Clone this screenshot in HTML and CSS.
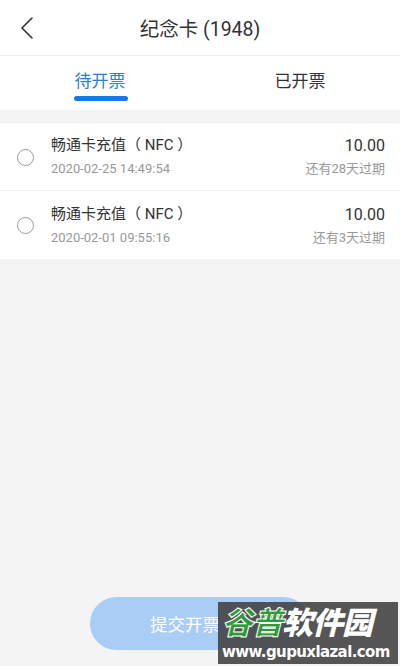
FILE: index.html
```html
<!DOCTYPE html>
<html lang="zh-CN">
  <head>
    <meta charset="UTF-8" />
    <meta name="viewport" content="width=device-width, initial-scale=1.0" />
    <title>纪念卡 (1948)</title>
    <link rel="stylesheet" href="styles.css">
  </head>
  <body>
    <div class="page">
      <div class="header">
        <button class="back" aria-label="返回">
          <svg width="14" height="24" viewBox="0 0 14 24">
            <path d="M12 2 L2 12 L12 22" fill="none" stroke="#333" stroke-width="1.6" stroke-linecap="round" stroke-linejoin="round" />
          </svg>
        </button>
        <div class="title">纪念卡 (1948)</div>
      </div>

      <div class="tabs">
        <div class="tab active">待开票</div>
        <div class="tab">已开票</div>
      </div>

      <div class="list">
        <div class="item">
          <span class="radio"></span>
          <div class="info">
            <div class="name">畅通卡充值（ NFC ）</div>
            <div class="date">2020-02-25 14:49:54</div>
          </div>
          <div class="side">
            <div class="amount">10.00</div>
            <div class="expire">还有28天过期</div>
          </div>
        </div>
        <div class="item">
          <span class="radio"></span>
          <div class="info">
            <div class="name">畅通卡充值（ NFC ）</div>
            <div class="date">2020-02-01 09:55:16</div>
          </div>
          <div class="side">
            <div class="amount">10.00</div>
            <div class="expire">还有3天过期</div>
          </div>
        </div>
      </div>

      <div class="footer">
        <button class="submit">提交开票</button>
      </div>

      <div class="watermark">
        <div class="wm-logo"><span class="wm-green">谷普</span><span class="wm-white">软件园</span></div>
        <div class="wm-url">www.gupuxlazal.com</div>
      </div>
    </div>
  </body>
</html>
```

FILE: styles.css
```css
* {
  margin: 0;
  padding: 0;
  box-sizing: border-box;
}

body {
  font-family: Roboto, "Noto Sans CJK SC", "Noto Sans", sans-serif;
  background-color: #f4f4f4;
  width: 400px;
  height: 666px;
  overflow: hidden;
}

.page {
  position: relative;
  height: 666px;
  display: flex;
  flex-direction: column;
}

.header {
  position: relative;
  height: 56px;
  background-color: #fff;
  border-bottom: 1px solid #ececec;
  display: flex;
  align-items: center;
  justify-content: center;
}

.back {
  position: absolute;
  left: 20px;
  top: 16px;
  border: none;
  background: none;
  display: flex;
}

.title {
  font-size: 19.5px;
  color: #333;
}

.tabs {
  height: 54px;
  background-color: #fff;
  display: flex;
}

.tab {
  flex: 1;
  display: flex;
  justify-content: center;
  padding-top: 11px;
  font-size: 17px;
  color: #333;
}

.tab.active {
  color: #2a7fd8;
  position: relative;
}

.tab.active::after {
  content: "";
  position: absolute;
  left: 74px;
  top: 40px;
  width: 54px;
  height: 5px;
  border-radius: 3px;
  background-color: #1a78e8;
}

.list {
  margin-top: 13px;
  background-color: #fff;
}

.item {
  height: 68px;
  display: flex;
  align-items: center;
  padding: 1px 15px 0 17px;
  border-bottom: 1px solid #f2f2f2;
}

.item:last-child {
  border-bottom: none;
}

.radio {
  width: 17px;
  height: 17px;
  border: 1.3px solid #9a9a9a;
  border-radius: 50%;
  margin-right: 17px;
}

.info {
  flex: 1;
}

.name {
  font-size: 15px;
  color: #333;
  line-height: 23px;
}

.date {
  font-size: 13px;
  color: #999;
  line-height: 23px;
}

.side {
  text-align: right;
}

.amount {
  font-size: 16px;
  color: #333;
  line-height: 23px;
}

.expire {
  font-size: 13px;
  color: #999;
  line-height: 23px;
}

.footer {
  margin-top: auto;
  padding-bottom: 16px;
  display: flex;
  justify-content: center;
}

.submit {
  width: 220px;
  height: 53px;
  border: none;
  border-radius: 27px;
  background-color: #a9cdf5;
  color: #fff;
  font-family: inherit;
  font-size: 17.5px;
  padding-right: 30px;
}

.watermark {
  position: absolute;
  left: 218px;
  top: 602px;
  width: 180px;
  height: 62px;
  background-color: rgba(70, 70, 70, 0.92);
  padding: 4px 2px 0 4px;
}

.wm-logo {
  font-size: 31px;
  font-weight: 900;
  font-style: italic;
  line-height: 36px;
  letter-spacing: -1px;
}

.wm-green {
  color: #2e9a3a;
  -webkit-text-stroke: 1px #fff;
}

.wm-white {
  color: #fff;
}

.wm-url {
  font-family: "DejaVu Sans", sans-serif;
  font-size: 15px;
  font-weight: bold;
  color: #fff;
  line-height: 20px;
  letter-spacing: -0.6px;
}
```
